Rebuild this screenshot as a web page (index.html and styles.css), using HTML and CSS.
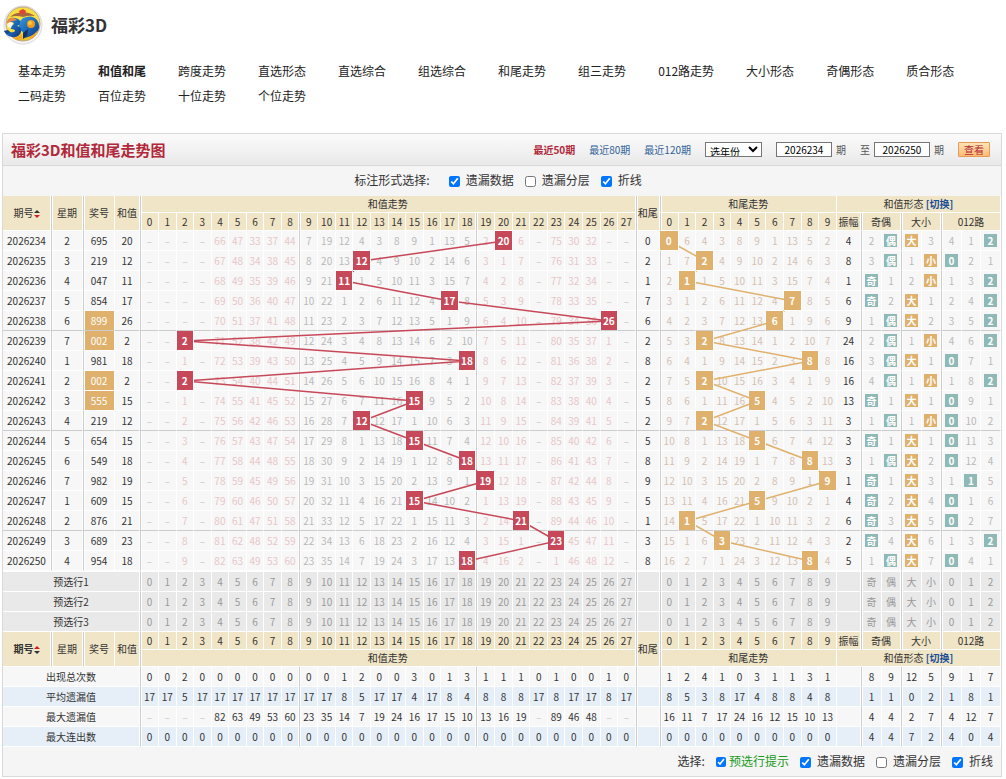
FILE: index.html
```
<!DOCTYPE html>
<html lang="zh-CN">
<head>
	<meta charset="UTF-8">
	<title>福彩3D和值和尾走势图</title>
	<link rel="stylesheet" href="styles.css">
</head>
<body>
	<header class="top">
		<svg class="logo" viewBox="0 0 40 40" aria-hidden="true">
			<defs>
				<linearGradient id="gold" x1="0" y1="0" x2="0" y2="1">
					<stop offset="0" stop-color="#f6dc3c"/>
					<stop offset="0.6" stop-color="#fbe64a"/>
					<stop offset="1" stop-color="#e9b820"/>
				</linearGradient>
				<linearGradient id="blue" x1="0" y1="0" x2="1" y2="1">
					<stop offset="0" stop-color="#3f9bd8"/>
					<stop offset="0.5" stop-color="#1c68b8"/>
					<stop offset="1" stop-color="#12357c"/>
				</linearGradient>
			</defs>
			<circle cx="20" cy="20" r="19" fill="#f8f6f4" stroke="#ddd6da"/>
			<circle cx="20" cy="19" r="17" fill="url(#gold)" stroke="#b7a791"/>
			<path d="M7 12Q13 7 19 8Q25 6 32 11Q26 10 20 12Q13 10 7 12z" fill="#a9673c"/>
			<path d="M16 6L20 4L23 6L22 9L17 9z" fill="#dd4436"/>
			<path d="M20 13Q29 9 34 15Q39 22 33 28Q28 32 21 33L20 27Q15 25 16 19Q17 15 20 13z" fill="url(#blue)"/>
			<path d="M4 17Q6 12 12 13Q18 14 17 18Q16 21 14 21Q19 22 18 27Q16 33 9 32Q3 31 1 26Q5 25 7 27Q11 28 12 26Q12 24 8 24Q7 21 10 20Q12 18 9 17Q7 16 4 17z" fill="url(#blue)"/>
			<path d="M4 17Q6 12 11 13L14 15Q11 16 9 16Q7 16 4 19z" fill="#ef8648"/>
			<path d="M4 19Q7 16 10 18L8 23L5 22z" fill="#fdf6ec"/>
			<path d="M1 26L5 25L7 27L4 29z" fill="#174789"/>
			<circle cx="28" cy="19" r="4" fill="#f29a1c"/>
			<circle cx="27" cy="18" r="2" fill="#ffc83c"/>
			<path d="M20 28L25 24L24 31L20 34z" fill="#162e62"/>
			<path d="M10 33Q15 33 19 29L19 34Q14 36 10 33z" fill="#f5a623"/>
			<path d="M26 32Q31 30 34 26Q33 31 28 34z" fill="#f5a623"/>
		</svg>
		<h1>福彩3D</h1>
	</header>
	<nav class="nav">
		<a href="#">基本走势</a>
		<a href="#" class="active">和值和尾</a>
		<a href="#">跨度走势</a>
		<a href="#">直选形态</a>
		<a href="#">直选综合</a>
		<a href="#">组选综合</a>
		<a href="#">和尾走势</a>
		<a href="#">组三走势</a>
		<a href="#">012路走势</a>
		<a href="#">大小形态</a>
		<a href="#">奇偶形态</a>
		<a href="#">质合形态</a>
		<a href="#">二码走势</a>
		<a href="#">百位走势</a>
		<a href="#">十位走势</a>
		<a href="#">个位走势</a>
	</nav>

	<section class="panel">
		<div class="panel-head">
			<h2>福彩3D和值和尾走势图</h2>
			<form class="search">
				<a href="#" class="active">最近50期</a>
				<a href="#">最近80期</a>
				<a href="#">最近120期</a>
				<select aria-label="选年份"><option>选年份</option></select>
				<label><input type="text" value="2026234" aria-label="开始期号">期</label>
				<label>至<input type="text" value="2026250" aria-label="结束期号">期</label>
				<button type="button">查看</button>
			</form>
		</div>
		<div class="options">
			<span class="options-title">标注形式选择:</span>
			<label><input type="checkbox" checked>遗漏数据</label>
			<label><input type="checkbox">遗漏分层</label>
			<label><input type="checkbox" class="chk-line" checked>折线</label>
		</div>
		<div class="chart" id="chart">
			<table>
				<colgroup id="cols"></colgroup>
				<thead id="head"></thead>
				<tbody id="list"></tbody>
				<tbody id="pre" class="pre"></tbody>
				<tbody id="foot" class="foot"></tbody>
				<tbody id="stat" class="stat"></tbody>
			</table>
			<svg class="lines" id="lines"></svg>
		</div>
		<div class="options options-bottom">
			<span>选择:</span>
			<label class="green"><input type="checkbox" checked>预选行提示</label>
			<label><input type="checkbox" checked>遗漏数据</label>
			<label><input type="checkbox">遗漏分层</label>
			<label><input type="checkbox" class="chk-line" checked>折线</label>
		</div>
	</section>
	<script src="chart.js"></script>
</body>
</html>
```
FILE: styles.css
```
body{margin:0;background:#fff;color:#333;font:12px/20px "Noto Sans CJK SC",sans-serif;}
h1,h2{margin:0;}
a{color:#333;text-decoration:none;}
input,select,button{font-family:inherit;}

.top{display:flex;align-items:center;gap:8px;height:50px;padding-left:3px;}
.top h1{font-size:17px;line-height:24px;}
.logo{width:40px;height:40px;}

.nav{display:flex;flex-wrap:wrap;padding:8px 2px 25px;}
.nav a{padding:0 16px;line-height:25px;color:#222;}
.nav a.active{font-weight:bold;}

.panel{margin:0 4px 0 2px;border:1px solid #d9d9d9;background:#f5f5f5;}
.panel-head{display:flex;justify-content:space-between;align-items:center;height:31px;padding:0 11px 0 8px;border-bottom:1px solid #d9d9d9;background:linear-gradient(#fbfbfb,#e9e9e9);}
.panel-head h2{font-size:15px;line-height:24px;color:#b1283a;}
.search{display:flex;align-items:center;gap:14px;font-size:10px;}
.search a{color:#2f6199;}
.search a.active{color:#b1283a;font-weight:bold;}
.search label{display:flex;align-items:center;gap:4px;color:#555;}
.search input{box-sizing:border-box;width:56px;height:15px;padding:0;border:1px solid #767676;background:#fff;font-size:10px;text-align:center;color:#000;}
.search select{box-sizing:border-box;width:57px;height:15px;padding:0;border:1px solid #767676;border-radius:0;background:#fff;font-size:10px;line-height:12px;color:#000;}
.search button{box-sizing:border-box;width:32px;height:15px;padding:0;border:1px solid #e79a55;border-radius:1px;background:linear-gradient(#ffe3b5,#fdbd74);font-size:10px;line-height:12px;color:#b1283a;}

.options{display:flex;justify-content:center;align-items:center;gap:11px;box-sizing:border-box;height:30px;padding:0 8px 2px 0;}
.options-title{margin-right:8px;}
.options label{display:flex;align-items:center;gap:6px;}
.options input{width:11px;height:11px;margin:3px 0 0;}
.options-bottom{justify-content:flex-end;height:29px;}
.options .green{gap:3px;color:#189a18;}
.options .green input{width:10px;height:10px;}

.chart{position:relative;}
.chart table{width:100%;table-layout:fixed;border-collapse:separate;border-spacing:0;font-size:10px;line-height:16px;text-align:center;}
.chart th,.chart td{box-sizing:border-box;height:20px;padding:0;border-right:1px solid #fff;border-bottom:1px solid #fff;background:#f7f7f7;font-weight:normal;white-space:nowrap;}
.chart .line-l{border-left:1px solid #ccc;box-shadow:inset 1px 0 #fff;}
.chart tr.split td{border-bottom-color:#ccc;}
.w-issue{width:48px;}
.w-info{width:32px;}
.w-sum{width:25px;}
.w-tail{width:24px;}
.w-first{width:19px;}
.w-form{width:19px;}
.w-form-first{width:21px;}
.w-form-last{width:20px;}

.chart th{height:18px;background:#f0e5c6;color:#333;}
.chart .tit th{height:17px;}
.chart th a{color:#1b4f95;font-weight:bold;}
.chart .foot th:first-child{font-weight:bold;}
.chart .foot .tit th:first-child{font-weight:normal;}
.sort{width:6px;height:8px;vertical-align:-1px;}

.chart .pink{color:#e8c6c8;}
.chart .gray{color:#b9b9b9;}
.chart .brown{color:#d4c0b2;}
.chart .none{color:#c9c9c9;}
.chart .special{background:#e0b16c;color:#fff;}
.chart .ball{position:relative;z-index:2;font-weight:bold;color:#fff;}
.chart .ball-red{background:#c74858;}
.chart .ball-orange{background:#e0b16c;}
.tag{display:block;width:13px;height:13px;margin:0 auto;background:#8fb9b6;line-height:13px;font-weight:bold;color:#fff;}
.tag-orange{background:#e0b16c;}

.chart .pre td{background:#e9e9e9;color:#999;}
.chart .pre td:first-child{color:#333;}
.chart .pre tr:first-child td{height:21px;border-top:1px solid #fff;}
.chart .stat tr:nth-child(even) td{background:#e6eff8;}

.lines{position:absolute;z-index:1;left:0;top:0;width:100%;height:100%;pointer-events:none;}
.lines polyline{fill:none;stroke-width:1.5;}
.lines .red{stroke:#c74858;}
.lines .orange{stroke:#e0b16c;}
```
FILE: chart.js
```
// 期号, 星期, 奖号, 振幅
var data = [
	[2026234,2,'695',4],[2026235,3,'219',8],[2026236,4,'047',1],[2026237,5,'854',6],
	[2026238,6,'899',9],[2026239,7,'002',24],[2026240,1,'981',16],[2026241,2,'002',16],
	[2026242,3,'555',13],[2026243,4,'219',3],[2026244,5,'654',3],[2026245,6,'549',3],
	[2026246,7,'982',1],[2026247,1,'609',4],[2026248,2,'876',6],[2026249,3,'689',2],
	[2026250,4,'954',5]
];

// 第一期的遗漏值，-1 表示一直没有出现
var missSum = [-1,-1,-1,-1,66,47,33,37,44,7,19,12,4,3,8,9,1,13,5,2,0,6,-1,75,30,32,-1,-1];
var missTail = [0,6,4,3,8,9,1,13,5,2];
var missOdd = [2,0];
var missBig = [0,3];
var missRoad = [4,1,0];

// 统计：标题, 和值, 和尾, 形态
var stats = [
	['出现总次数',[0,0,2,0,0,0,0,0,0,0,0,1,2,0,0,3,0,1,3,1,1,1,0,1,0,0,1,0],[1,2,4,1,0,3,1,1,3,1],[8,9,12,5,9,1,7]],
	['平均遗漏值',[17,17,5,17,17,17,17,17,17,17,17,8,5,17,17,4,17,8,4,8,8,8,17,8,17,17,8,17],[8,5,3,8,17,4,8,8,4,8],[1,1,0,2,1,8,1]],
	['最大遗漏值',[-1,-1,-1,-1,82,63,49,53,60,23,35,14,7,19,24,16,17,15,10,13,16,19,-1,89,46,48,-1,-1],[16,11,7,17,24,16,12,15,10,13],[4,4,2,7,4,12,7]],
	['最大连出数',[0,0,0,0,0,0,0,0,0,0,0,0,0,0,0,0,0,0,0,0,0,0,0,0,0,0,0,0],[0,0,0,0,0,0,0,0,0,0],[4,4,7,2,4,0,4]]
];

function $(id){
	return document.getElementById(id);
}

function td(txt,cls,attr){
	return '<td class="' + (cls || '') + '"' + (attr || '') + '>' + txt + '</td>';
}

function th(txt,cls,attr){
	return '<th class="' + (cls || '') + '"' + (attr || '') + '>' + txt + '</th>';
}

// 每一区的第一列带竖线
function sumLine(i){
	return i === 0 || i === 9 || i === 19 ? 'line-l ' : '';
}

function formLine(i){
	return i === 0 || i === 2 || i === 4 ? 'line-l ' : '';
}

function cols(){
	var html = '<col class="w-issue"><col class="w-info"><col class="w-info"><col class="w-sum">';
	var i;
	for(i=0;i<28;i++) html += sumLine(i) ? '<col class="w-first">' : '<col>';
	html += '<col class="w-tail">';
	for(i=0;i<10;i++) html += i === 0 ? '<col class="w-first">' : '<col>';
	html += '<col class="w-tail">';
	for(i=0;i<7;i++) html += '<col class="' + (formLine(i) ? 'w-form-first' : i === 6 ? 'w-form-last' : 'w-form') + '">';
	return html;
}

function header(isFoot){
	var up = isFoot ? '#c22' : '#333';
	var down = isFoot ? '#333' : '#c22';
	var sort = '<svg class="sort" viewBox="0 0 6 8"><path d="M0 3L3 0L6 3z" fill="' + up + '"/><path d="M0 5L3 8L6 5z" fill="' + down + '"/></svg>';
	var r2 = ' rowspan="2"';
	var info = th('期号' + sort,'',r2) + th('星期','line-l',r2) + th('奖号','line-l',r2) + th('和值','',r2);
	var tail = th('和尾','line-l',r2);
	var titles = [th('和值走势','line-l',' colspan="28"'), th('和尾走势','line-l',' colspan="10"'), th('和值形态 <a href="#">[切换]</a>','',' colspan="8"')];
	var nums = ['','',''];
	var i;
	for(i=0;i<28;i++) nums[0] += th(i,sumLine(i));
	for(i=0;i<10;i++) nums[1] += th(i,i ? '' : 'line-l');
	nums[2] = th('振幅') + th('奇偶','line-l',' colspan="2"') + th('大小','line-l',' colspan="2"') + th('012路','line-l',' colspan="3"');
	var a = isFoot ? nums : titles;
	var b = isFoot ? titles : nums;
	return '<tr class="' + (isFoot ? '' : 'tit') + '">' + info + a[0] + tail + a[1] + a[2] + '</tr>' +
		'<tr class="' + (isFoot ? 'tit' : '') + '">' + b.join('') + '</tr>';
}

// 遗漏值加1，开出的号码归零
function next(miss,hit){
	for(var i=0;i<miss.length;i++){
		if(i === hit) miss[i] = 0;
		else if(miss[i] !== -1) miss[i]++;
	}
}

function form(miss,hit,names,orange){
	var html = '';
	for(var i=0;i<miss.length;i++){
		html += i === hit
			? td('<span class="tag ' + (orange ? 'tag-orange' : '') + '">' + names[i] + '</span>',i ? '' : 'line-l')
			: td(miss[i],(i ? '' : 'line-l ') + 'gray');
	}
	return html;
}

function list(){
	var html = '';
	data.forEach(function(row,n){
		var num = row[2];
		var sum = +num[0] + +num[1] + +num[2];
		var tail = sum % 10;
		var odd = sum % 2 ? 0 : 1;
		var big = sum > 13 ? 0 : 1;
		var road = sum % 3;
		var same = num[0] === num[1] || num[1] === num[2] || num[0] === num[2];
		var i;
		if(n){
			next(missSum,sum);
			next(missTail,tail);
			next(missOdd,odd);
			next(missBig,big);
			next(missRoad,road);
		}
		html += '<tr class="' + (n % 5 === 4 ? 'split' : '') + '">';
		html += td(row[0]) + td(row[1],'line-l') + td(num,'line-l' + (same ? ' special' : '')) + td(sum);
		for(i=0;i<28;i++){
			if(i === sum) html += td(i,'ball ball-red');
			else if(missSum[i] === -1) html += td('–',sumLine(i) + 'none');
			else html += td(missSum[i],sumLine(i) + (i > 8 && i < 19 ? 'gray' : 'pink'));
		}
		html += td(tail,'line-l');
		for(i=0;i<10;i++){
			html += i === tail ? td(i,'ball ball-orange') : td(missTail[i],(i ? '' : 'line-l ') + 'brown');
		}
		html += td(row[3]);
		html += form(missOdd,odd,['奇','偶']) + form(missBig,big,['大','小'],true) + form(missRoad,road,[0,1,2]);
		html += '</tr>';
	});
	return html;
}

function pre(){
	var html = '';
	for(var n=1;n<4;n++){
		var i;
		html += '<tr>' + td('预选行' + n,'',' colspan="4"');
		for(i=0;i<28;i++) html += td(i,sumLine(i));
		html += td('','line-l');
		for(i=0;i<10;i++) html += td(i,i ? '' : 'line-l');
		html += td('');
		['奇','偶','大','小',0,1,2].forEach(function(t,i){
			html += td(t,formLine(i));
		});
		html += '</tr>';
	}
	return html;
}

function stat(){
	return stats.map(function(s){
		var html = '<tr>' + td(s[0],'',' colspan="4"');
		s[1].forEach(function(v,i){
			html += v === -1 ? td('–',sumLine(i) + 'none') : td(v,sumLine(i));
		});
		html += td('','line-l');
		s[2].forEach(function(v,i){ html += td(v,i ? '' : 'line-l'); });
		html += td('');
		s[3].forEach(function(v,i){ html += td(v,formLine(i)); });
		return html + '</tr>';
	}).join('');
}

// 折线连接每一期的中心点
function drawLines(){
	var box = $('chart').getBoundingClientRect();
	var html = '';
	['red','orange'].forEach(function(color){
		var points = [];
		document.querySelectorAll('.ball-' + color).forEach(function(el){
			var r = el.getBoundingClientRect();
			points.push((r.left + r.width / 2 - box.left) + ',' + (r.top + r.height / 2 - box.top));
		});
		html += '<polyline class="' + color + '" points="' + points.join(' ') + '"/>';
	});
	$('lines').innerHTML = html;
}

$('cols').innerHTML = cols();
$('head').innerHTML = header(false);
$('list').innerHTML = list();
$('pre').innerHTML = pre();
$('foot').innerHTML = header(true);
$('stat').innerHTML = stat();
drawLines();
window.onresize = drawLines;

var chks = document.querySelectorAll('.chk-line');
chks.forEach(function(chk){
	chk.onchange = function(){
		chks.forEach(function(c){ c.checked = chk.checked; });
		$('lines').style.display = chk.checked ? '' : 'none';
	};
});
```
